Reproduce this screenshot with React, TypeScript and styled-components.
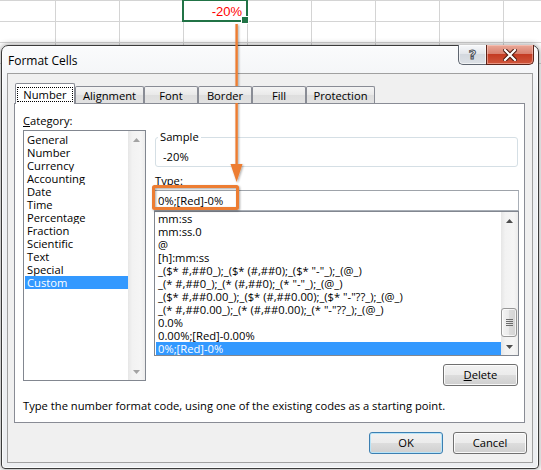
import styled, { createGlobalStyle, css } from 'styled-components';

const UI = `'Open Sans', 'Noto Sans', sans-serif`;

const GlobalStyle = createGlobalStyle`
  * { box-sizing: border-box; }
  html, body { margin: 0; padding: 0; background: #ffffff; }
  body { font-family: ${UI}; font-size: 11.2px; color: #000; }
`;

const Page = styled.div`
  position: relative;
  width: 541px;
  height: 470px;
  overflow: hidden;
  background: #fff;
`;

/* ---------- spreadsheet strip ---------- */

const Sheet = styled.div`
  display: grid;
  grid-template-columns: 56px repeat(8, 64px);
  grid-auto-rows: 21px;
  height: 45px;
  border-top: 1px solid #d4d4d4;
`;

const Cell = styled.div<{ $selected?: boolean }>`
  position: relative;
  border-right: 1px solid #d4d4d4;
  border-bottom: 1px solid #d4d4d4;
  font-family: 'Liberation Sans', Arial, sans-serif;
  font-size: 13px;
  line-height: 16px;
  padding: 3px 5px 0 0;
  text-align: right;
  color: #ff0000;
  ${(p) =>
    p.$selected &&
    css`
      &::after {
        content: '';
        position: absolute;
        inset: -2px -1px -1px -2px;
        border: 2px solid #217346;
      }
      &::before {
        content: '';
        position: absolute;
        right: -2px;
        bottom: -3px;
        width: 6px;
        height: 6px;
        background: #217346;
        border: 1px solid #fff;
        z-index: 1;
      }
    `}
`;

/* ---------- dialog frame ---------- */

const Dialog = styled.div`
  position: relative;
  margin-left: 1px;
  width: 538px;
  height: 424px;
  border: 1px solid #3a3a3a;
  border-radius: 7px 7px 4px 4px;
  background: linear-gradient(#fafbfc, #eef0f3 60px, #eceef1);
  box-shadow: 0 0 6px rgba(0, 0, 0, 0.45), inset 0 0 0 1px rgba(255, 255, 255, 0.8);
  display: flex;
  flex-direction: column;
`;

const TitleBar = styled.div`
  display: flex;
  align-items: flex-start;
  height: 27px;
`;

const Title = styled.div`
  margin: 7px 0 0 6px;
  font-size: 12px;
  line-height: 16px;
  color: #000;
`;

const CaptionButtons = styled.div`
  display: flex;
  margin: -1px 4px 0 auto;
`;

const HelpButton = styled.div`
  width: 28px;
  height: 20px;
  border: 1px solid #5f6670;
  border-top: none;
  border-right: none;
  border-radius: 0 0 0 5px;
  background: linear-gradient(#f7f8fa, #e4e7eb 45%, #d3d8de 50%, #dde1e6);
  box-shadow: inset 0 0 0 1px rgba(255, 255, 255, 0.6);
  display: flex;
  align-items: center;
  justify-content: center;
  font-family: 'DejaVu Sans', sans-serif;
  font-weight: bold;
  font-size: 13px;
  color: #f4f4f4;
  -webkit-text-stroke: 1px #4a4f57;
`;

const CloseButton = styled.div`
  width: 48px;
  height: 20px;
  border: 1px solid #5b2318;
  border-top: none;
  border-radius: 0 0 5px 0;
  background: linear-gradient(#eaa898, #d98270 45%, #c43b22 50%, #d0573c);
  box-shadow: inset 0 0 0 1px rgba(255, 210, 200, 0.5);
  display: flex;
  align-items: center;
  justify-content: center;
`;

const Client = styled.div`
  flex: 1;
  margin: 0 5px 5px 5px;
  border: 1px solid #a0a0a0;
  background: #f0f0f0;
  padding: 9px 5px 0 6px;
  display: flex;
  flex-direction: column;
`;

/* ---------- tabs ---------- */

const TabStrip = styled.div`
  position: relative;
  z-index: 1;
  display: flex;
  align-items: flex-end;
  height: 20px;
  padding-left: 1px;
`;

const Tab = styled.div<{ $active?: boolean; $w: number }>`
  width: ${(p) => p.$w}px;
  height: ${(p) => (p.$active ? 21 : 17)}px;
  margin-bottom: ${(p) => (p.$active ? -1 : 0)}px;
  border: 1px solid #898c95;
  border-bottom: none;
  border-radius: 2px 2px 0 0;
  background: ${(p) => (p.$active ? '#ffffff' : 'linear-gradient(#f4f4f4, #e9e9e9 50%, #dedede 50%, #e2e2e2)')};
  display: flex;
  align-items: center;
  justify-content: center;
  padding-top: ${(p) => (p.$active ? 1 : 0)}px;
`;

const FocusLabel = styled.span`
  border: 1px dotted #000;
  padding: 0 5px;
  line-height: 13px;
`;

const TabPanel = styled.div`
  height: 320px;
  margin-right: 2px;
  border: 1px solid #898c95;
  background: #ffffff;
  padding: 9px 5px 0 8px;
  display: flex;
  flex-direction: column;
`;

const Columns = styled.div`
  display: flex;
  gap: 8px;
`;

const LeftCol = styled.div`
  width: 123px;
  display: flex;
  flex-direction: column;
`;

const RightCol = styled.div`
  width: 365px;
  padding-top: 17px;
  display: flex;
  flex-direction: column;
`;

const FieldLabel = styled.div<{ $mt?: number }>`
  line-height: 15px;
  margin: ${(p) => p.$mt ?? 0}px 0 2px 0;
  padding-left: ${(p) => (p.$mt ? 1 : 0)}px;
  u { text-decoration: underline; }
`;

const SampleBox = styled.fieldset`
  margin: 0 1px;
  padding: 0 2px 2px 2px;
  border: 1px solid #d5dfe5;
  border-radius: 3px;
  min-inline-size: 0;
`;

const SampleLegend = styled.legend`
  padding: 0 2px;
  line-height: 14px;
`;

const SampleValue = styled.div`
  margin-top: 5px;
  padding-left: 5px;
  line-height: 15px;
`;

const TypeInput = styled.div`
  height: 21px;
  border: 1px solid #a9afb7;
  border-top-color: #9ea3aa;
  padding-left: 3px;
  line-height: 19px;
  background: #fff;
`;

/* ---------- list boxes ---------- */

const ListBox = styled.div<{ $h: number }>`
  height: ${(p) => p.$h}px;
  border: 1px solid #828790;
  background: #fff;
  display: flex;
`;

const Rows = styled.div<{ $pt: number }>`
  flex: 1;
  min-width: 0;
  padding: ${(p) => p.$pt}px 0 0 1px;
  overflow: hidden;
`;

const Row = styled.div<{ $selected?: boolean }>`
  height: 13px;
  line-height: 13px;
  padding-left: 2px;
  white-space: nowrap;
  overflow: hidden;
  background: ${(p) => (p.$selected ? '#3399ff' : 'transparent')};
  color: ${(p) => (p.$selected ? '#ffffff' : '#000000')};
`;

const ScrollBar = styled.div`
  width: 17px;
  display: flex;
  flex-direction: column;
  background: linear-gradient(90deg, #e6e6e6, #f2f2f2 25%, #f5f5f5 75%, #ececec);
`;

const ScrollArrow = styled.div`
  height: 17px;
  display: flex;
  align-items: center;
  justify-content: center;
`;

const ScrollTrack = styled.div`
  flex: 1;
  display: flex;
  flex-direction: column;
  justify-content: flex-end;
  padding-bottom: 1px;
`;

const Thumb = styled.div`
  height: 29px;
  margin: 0 1px 0 0;
  border: 1px solid #979797;
  border-radius: 3px;
  background: linear-gradient(90deg, #f4f4f4, #e9e9e9 50%, #dcdcdc 51%, #d3d3d3);
  box-shadow: inset 0 0 0 1px rgba(255, 255, 255, 0.7);
  display: flex;
  align-items: center;
  justify-content: center;
`;

/* ---------- buttons ---------- */

const Button = styled.div<{ $w: number; $default?: boolean }>`
  width: ${(p) => p.$w}px;
  height: 22px;
  border: 1px solid ${(p) => (p.$default ? '#3c7fb1' : '#707070')};
  border-radius: 3px;
  background: linear-gradient(#f2f2f2, #ebebeb 50%, #dddddd 50%, #cfcfcf);
  box-shadow: inset 0 0 0 1px ${(p) => (p.$default ? '#b8e4f8' : 'rgba(255, 255, 255, 0.85)')};
  display: flex;
  align-items: center;
  justify-content: center;
  line-height: 14px;
`;

const DeleteRow = styled.div`
  display: flex;
  justify-content: flex-end;
  margin-top: 8px;
  padding-right: 1px;
`;

const HelpText = styled.div`
  margin-top: 12px;
  line-height: 15px;
`;

const ButtonRow = styled.div`
  display: flex;
  justify-content: flex-end;
  gap: 10px;
  margin-top: 9px;
`;

const Overlay = styled.svg`
  position: absolute;
  left: 0;
  top: 0;
  pointer-events: none;
`;

const Arrow = ({ up, disabled }: { up?: boolean; disabled?: boolean }) => (
  <svg width="7" height="4" viewBox="0 0 7 4">
    <polygon
      points={up ? '0,4 7,4 3.5,0' : '0,0 7,0 3.5,4'}
      fill={disabled ? '#a3a3a3' : '#4d4d4d'}
    />
  </svg>
);

const categories = [
  'General',
  'Number',
  'Currency',
  'Accounting',
  'Date',
  'Time',
  'Percentage',
  'Fraction',
  'Scientific',
  'Text',
  'Special',
  'Custom',
];

const formats = [
  'mm:ss',
  'mm:ss.0',
  '@',
  '[h]:mm:ss',
  '_($* #,##0_);_($* (#,##0);_($* "-"_);_(@_)',
  '_(* #,##0_);_(* (#,##0);_(* "-"_);_(@_)',
  '_($* #,##0.00_);_($* (#,##0.00);_($* "-"??_);_(@_)',
  '_(* #,##0.00_);_(* (#,##0.00);_(* "-"??_);_(@_)',
  '0.0%',
  '0.00%;[Red]-0.00%',
  '0%;[Red]-0%',
];

const tabs = [
  { label: 'Number', w: 60 },
  { label: 'Alignment', w: 69 },
  { label: 'Font', w: 54 },
  { label: 'Border', w: 54 },
  { label: 'Fill', w: 54 },
  { label: 'Protection', w: 69 },
];

export default function App() {
  return (
    <Page>
      <GlobalStyle />
      <Sheet>
        {Array.from({ length: 27 }).map((_, i) => (
          <Cell key={i} $selected={i === 3}>
            {i === 3 ? '-20%' : ''}
          </Cell>
        ))}
      </Sheet>

      <Dialog>
        <TitleBar>
          <Title>Format Cells</Title>
          <CaptionButtons>
            <HelpButton>?</HelpButton>
            <CloseButton>
              <svg width="14" height="12" viewBox="0 0 14 12">
                <path d="M2 1 L12 11 M12 1 L2 11" stroke="#4a1a10" strokeWidth="4.2" strokeLinecap="square" />
                <path d="M2 1 L12 11 M12 1 L2 11" stroke="#ffffff" strokeWidth="2.2" strokeLinecap="square" />
              </svg>
            </CloseButton>
          </CaptionButtons>
        </TitleBar>

        <Client>
          <TabStrip>
            {tabs.map((t, i) => (
              <Tab key={t.label} $w={t.w} $active={i === 0}>
                {i === 0 ? <FocusLabel>{t.label}</FocusLabel> : t.label}
              </Tab>
            ))}
          </TabStrip>

          <TabPanel>
            <Columns>
              <LeftCol>
                <FieldLabel>
                  <u>C</u>ategory:
                </FieldLabel>
                <ListBox $h={251}>
                  <Rows $pt={2}>
                    {categories.map((c) => (
                      <Row key={c} $selected={c === 'Custom'}>
                        {c}
                      </Row>
                    ))}
                  </Rows>
                  <ScrollBar>
                    <ScrollArrow>
                      <Arrow up disabled />
                    </ScrollArrow>
                    <ScrollTrack />
                    <ScrollArrow>
                      <Arrow disabled />
                    </ScrollArrow>
                  </ScrollBar>
                </ListBox>
              </LeftCol>

              <RightCol>
                <SampleBox>
                  <SampleLegend>Sample</SampleLegend>
                  <SampleValue>-20%</SampleValue>
                </SampleBox>
                <FieldLabel $mt={6}>
                  <u>T</u>ype:
                </FieldLabel>
                <TypeInput>0%;[Red]-0%</TypeInput>
                <ListBox $h={145}>
                  <Rows $pt={0}>
                    {formats.map((f, i) => (
                      <Row key={f} $selected={i === formats.length - 1}>
                        {f}
                      </Row>
                    ))}
                  </Rows>
                  <ScrollBar>
                    <ScrollArrow>
                      <Arrow up />
                    </ScrollArrow>
                    <ScrollTrack>
                      <Thumb>
                        <svg width="7" height="8" viewBox="0 0 7 8">
                          {[0.5, 2.5, 4.5, 6.5].map((y) => (
                            <line key={y} x1="0" x2="7" y1={y} y2={y} stroke="#6b6b6b" strokeWidth="1" />
                          ))}
                        </svg>
                      </Thumb>
                    </ScrollTrack>
                    <ScrollArrow>
                      <Arrow />
                    </ScrollArrow>
                  </ScrollBar>
                </ListBox>
                <DeleteRow>
                  <Button $w={75}>
                    <u>D</u>elete
                  </Button>
                </DeleteRow>
              </RightCol>
            </Columns>
            <HelpText>Type the number format code, using one of the existing codes as a starting point.</HelpText>
          </TabPanel>

          <ButtonRow>
            <Button $w={74} $default>
              OK
            </Button>
            <Button $w={74}>Cancel</Button>
          </ButtonRow>
        </Client>
      </Dialog>

      <Overlay width="541" height="470" viewBox="0 0 541 470">
        <defs>
          <filter id="annShadow" x="-20%" y="-20%" width="140%" height="140%">
            <feDropShadow dx="1" dy="1" stdDeviation="0.8" floodColor="#000" floodOpacity="0.35" />
          </filter>
        </defs>
        <g filter="url(#annShadow)">
          <line x1="236.6" y1="24" x2="236.6" y2="167" stroke="#ed7d31" strokeWidth="2.4" />
          <polygon points="230.5,164 242.5,164 236.6,182" fill="#ed7d31" />
          <rect x="153.5" y="186.5" width="84" height="22" rx="1" fill="none" stroke="#ed7d31" strokeWidth="3" />
        </g>
      </Overlay>
    </Page>
  );
}
